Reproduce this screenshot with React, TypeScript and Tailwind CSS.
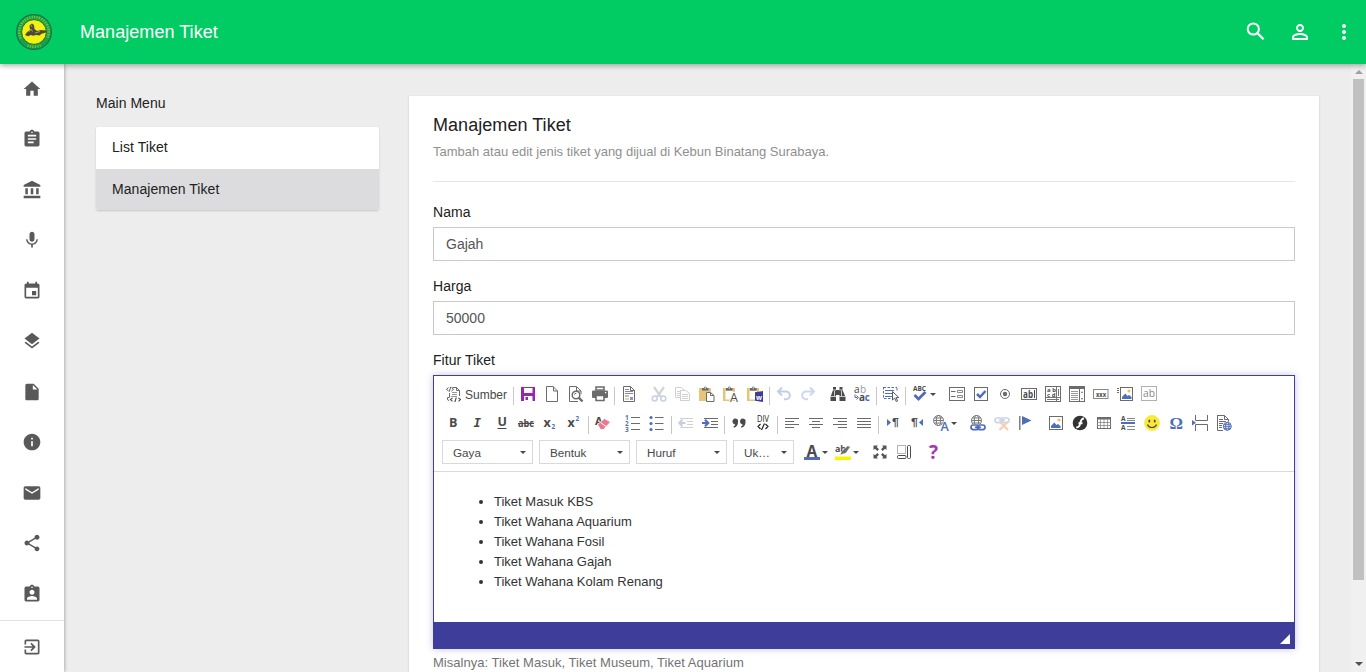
import React from "react";
import {
  MdHome, MdAssignment, MdAccountBalance, MdMic, MdEvent, MdLayers, MdInsertDriveFile,
  MdInfo, MdEmail, MdShare, MdAssignmentInd, MdExitToApp, MdMoreVert, MdPersonOutline,
} from "react-icons/md";

const G = "#6b6b6b";
const D = "#4a4a4a";
const B = "#4f6db8";
const SANS = "'Liberation Sans', Arial, sans-serif";
const OPEN = "'Open Sans', 'Noto Sans', sans-serif";

type TProps = { x: number; y: number; s: number; c?: string; b?: boolean; i?: boolean; f?: string; w?: number; children: string };
const T = ({ x, y, s, c = D, b, i, f = OPEN, w, children }: TProps) => (
  <text x={x} y={y} fontSize={s} fill={c} fontFamily={f} fontWeight={b ? 700 : 400} fontStyle={i ? "italic" : "normal"} textLength={w} lengthAdjust="spacingAndGlyphs">
    {children}
  </text>
);

const lines = (d: string, c = G, w = 1) => <path d={d} stroke={c} strokeWidth={w} fill="none" />;
const Globe = ({ x, y, r, c }: { x: number; y: number; r: number; c: string }) => (
  <g stroke={c} fill="none" strokeWidth={1}>
    <circle cx={x} cy={y} r={r} />
    <ellipse cx={x} cy={y} rx={r / 2.3} ry={r} />
    <path d={`M${x - r} ${y}H${x + r}M${x - r * 0.85} ${y - r / 2}H${x + r * 0.85}M${x - r * 0.85} ${y + r / 2}H${x + r * 0.85}`} />
  </g>
);
const Clipboard = () => (
  <>
    <path d="M0 2h12v13H0z" fill="#e6c57a" />
    <path d="M3 4.500V2h1.800a1.500 1.500 0 0 1 3 0h1.800v2.500z" fill={G} />
    <circle cx="6.300" cy="2" r=".7" fill="#fff" />
  </>
);
const Chain = ({ y, c }: { y: number; c: string }) => (
  <g stroke={c} strokeWidth={1.7} fill="none">
    <rect x={1} y={y} width="7.800" height="4.600" rx="2.300" />
    <rect x={7.200} y={y} width="7.800" height="4.600" rx="2.300" />
    <path d={`M5 ${y + 2.300}h6`} />
  </g>
);
const Pic = ({ x = 0, w = 14 }: { x?: number; w?: number }) => (
  <>
    <rect x={x + 0.5} y="1.500" width={w - 1} height="13" fill="#fff" stroke={G} />
    <circle cx={x + w - 4} cy="5" r="1.600" fill="#e8c26a" />
    <path d={`M${x + 2} 13v-2l3.300-3.500 2.200 2.500 1.500-1 2.500 2V13z`} fill={B} />
  </>
);

const icons: Record<string, React.ReactNode> = {
  source: (
    <>
      <path d="M6.500 1.500h4l3 3V10M10.500 1.500v3h3M3.500 7v4.500H1.500v1.500a1.500 1.500 0 0 0 1.500 1.500" stroke={G} fill="none" />
      <path d="M2.500 1.500L.5 3.300l2 1.700M5.500 1.500l2 1.800L5.500 5M4.700.8L3.300 5.700" stroke={D} fill="none" strokeWidth=".9" />
      <path d="M6 6.500h5M6 8.500h5M5 10.500h6" stroke="#999" />
      <path d="M6.500 11.800l-2 1.800 2 1.700M12.500 11.800l2 1.800-2 1.700M10.300 11.500l-1.500 4.500" stroke={D} fill="none" strokeWidth="1.100" />
    </>
  ),
  save: (
    <>
      <path d="M1 1h14v14H1z" fill="#9427ae" />
      <path d="M4 2h8.500v5H4zM4 10h8.500v5H4z" fill="#fff" />
      <path d="M5.500 11h2.500v3H5.500z" fill="#9427ae" />
    </>
  ),
  newpage: lines("M2.500.5H9l4.500 4.500V15.500H2.500zM9.500.5v4.500h4"),
  preview: (
    <>
      {lines("M1.500 15.500V.500H8.500l4.500 4.500V8M8.500 1v4h4.500M1.500 15.500H10")}
      <circle cx="8" cy="9" r="3.800" stroke={G} strokeWidth="1.500" fill="#fff" />
      <path d="M10.700 11.700l3.800 3.800" stroke={G} strokeWidth="2.400" />
      <path d="M6.300 8.800a2 2 0 0 1 2-1.500" stroke={B} fill="none" />
    </>
  ),
  print: (
    <>
      <path d="M4 1h8V4H4z" fill="#fff" stroke={G} strokeWidth="1.600" />
      <rect x="0" y="4.500" width="16" height="7.500" rx="1.200" fill={G} />
      <path d="M4 9.500h8v5H4z" fill="#fff" stroke={G} strokeWidth="1.600" />
      <path d="M13 6h1.300v1.300H13z" fill="#fff" />
    </>
  ),
  templates: (
    <>
      {lines("M2.500.5H9.500l4 4V15.500H2.500zM9.500.5v4h4")}
      {lines("M4 3.500h4M4 5.500h8M4 7.500h8", "#8a8a8a")}
      <path d="M4 9h4v2H4z" fill={B} opacity=".45" /><path d="M4 12h4v2H4z" fill="#e8c26a" opacity=".7" /><path d="M9 11h3v3H9z" fill={B} opacity=".7" />
    </>
  ),
  cut: (
    <>
      <path d="M3 1l7 10M13 1L6 11" stroke="#d4d4d4" strokeWidth="2.200" />
      <circle cx="3.700" cy="12.500" r="2.500" stroke="#c6d0e8" strokeWidth="1.500" fill="#fff" />
      <circle cx="12.300" cy="12.500" r="2.500" stroke="#c6d0e8" strokeWidth="1.500" fill="#fff" />
    </>
  ),
  copy: (
    <>
      {lines("M.5 1.500H6.500l3 3V11.500H.5zM2 5.500h3M2 7.500h3M2 9.500h3", "#d0d0d0")}
      <path d="M5.500 4.500H11l3.500 3V14.500H5.500z" fill="#fff" stroke="#d0d0d0" />
      {lines("M7 8.500h6M7 10.500h6M7 12.500h6", "#d0d0d0")}
    </>
  ),
  paste: (<><Clipboard /><path d="M7.500 6.500h4l3.500 3V15.500H7.500z" fill="#fff" stroke={G} />{lines("M11.500 6.500v3h3.500")}</>),
  pastetext: (<><Clipboard /><path d="M2.500 5h7.500v2.500l-3 6H2.500z" fill="#fff" /><text x="7" y="15.500" fontSize="12.500" fill={D} stroke="#fff" strokeWidth="1.500" paintOrder="stroke" fontFamily={OPEN}>A</text></>),
  pasteword: (<><Clipboard /><path d="M2.500 5h7.500v8.500H2.500z" fill="#fff" /><path d="M8 6.200l8-1.200v11l-8-1.200z" fill="#3f3d99" /><T x={9} y={13.500} s={7.500} c="#fff" b w={6}>w</T></>),
  undo: <path d="M6 1.500L2 5.500l4 4M2.500 5.500H10a3.800 3.800 0 0 1 0 7.700H8" stroke="#c3cde6" strokeWidth="2" fill="none" />,
  redo: <path d="M10 1.500l4 4-4 4M13.500 5.500H6a3.800 3.800 0 0 0 0 7.700H8" stroke="#cdd6eb" strokeWidth="2" fill="none" />,
  find: (<><path d="M3 1h3v3h3.500V1h3v3l3 7v4H9.500V9H6v6H.5v-4l2.500-7z" fill={D} /><path d="M.5 10.500H6M9.500 10.500h6M3 4h3M9.500 4h3M4.500 5v5M11.500 5v5" stroke="#fff" strokeWidth=".7" /><path d="M6 6.500h4" stroke={D} /></>),
  replace: (<><T x={0} y={7} s={10} c="#444">a</T><T x={6} y={7} s={10} c="#999">b</T><T x={5} y={15} s={10} b>a</T><T x={10.800} y={15} s={10} c={B} b>c</T><path d="M1 8.500v3H3.500M2.500 9.500l2 2-2 2" stroke={B} fill="none" /></>),
  select: (<><path d="M.5 1.500H14M.5 1v11.500H8M14 2v4" stroke={B} strokeDasharray="2.500 1.500" fill="none" /><path d="M2 4.500h9M2 7.500h7M2 10.500h7" stroke={B} /><path d="M9.500 5.500v8.500l2.200-2 1.500 3.500 1.300-.6-1.400-3.300h2.800z" fill="#fff" stroke={D} strokeWidth=".9" /></>),
  spell: (<><T x={1} y={5} s={6.500} b w={13}>ABC</T><path d="M2.500 9l4 4 7-7" stroke={B} strokeWidth="2.800" fill="none" /></>),
  form: (<><rect x=".5" y="1.500" width="15" height="13" stroke={G} fill="#fff" />{lines("M2 5.500h4.500M2 10.500h4.500")}{lines("M8.500 4.500h5v2h-5zM8.500 9.500h5v2h-5z", "#8a8a8a")}</>),
  checkbox: (<><rect x="1.500" y="1.500" width="13" height="13" stroke={G} fill="#fff" /><path d="M4 8l3 3 5.500-6" stroke={B} strokeWidth="2.500" fill="none" /></>),
  radio: (<><circle cx="8" cy="8" r="4.500" stroke={G} fill="none" /><circle cx="8" cy="8" r="2.200" fill={G} /></>),
  textfield: (<><rect x=".5" y="2.500" width="15" height="11" stroke={G} fill="#fff" /><T x={2} y={11.500} s={10} b w={10}>ab</T>{lines("M13.500 4v8", D)}</>),
  textarea: (<><rect x=".5" y=".5" width="15" height="15" stroke={G} fill="#fff" />{lines("M11.500 1v14M1 11.500h14M13.500 3v7", "#777")}{lines("M2 13.500h12", "#777")}<T x={2} y={5.500} s={6} b>a b</T><T x={2} y={10.500} s={6} b>c d</T></>),
  selectbox: (<><rect x=".5" y=".5" width="15" height="15" stroke={G} fill="#fff" />{lines("M1 2h9", G, 2)}{lines("M10.500 1v14", G)}{lines("M2 5.500h7M2 7.500h7M2 9.500h7M2 11.500h7M2 13.500h7", "#999")}<path d="M11 1h4v2h-4zM12 7l1-2 1 2zM12 12l1 2 1-2z" fill={G} /></>),
  button: (<><rect x=".5" y="3.500" width="14.500" height="9" stroke="#888" fill="#fff" /><T x={3} y={10.500} s={7} b w={10}>xxx</T></>),
  imgbutton: (<><Pic x={3} w={13} />{lines("M0 2.500h2M0 4.500h2M0 6.500h2", G)}</>),
  hidden: (<><rect x=".5" y=".5" width="15" height="14" stroke="#b0b0b0" fill="#fff" /><T x={2} y={11} s={11} c="#888" w={12}>ab</T></>),
  bold: <T x={3} y={12} s={12.500} b>B</T>,
  italic: <T x={3.500} y={12} s={12.500} b i f="'DejaVu Sans Mono', monospace">I</T>,
  underline: (<><T x={3.500} y={11} s={12.500} b>U</T>{lines("M3.500 13.500h9", D)}</>),
  strike: (<><T x={0} y={12} s={11} b w={16}>abc</T>{lines("M0 8.500h16", D)}</>),
  sub: (<><T x={1.500} y={12} s={12.500} b>x</T><T x={9.500} y={14} s={6.500} c={B} b>2</T></>),
  sup: (<><T x={1.500} y={12} s={12.500} b>x</T><T x={9.500} y={6} s={6.500} c={B} b>2</T></>),
  eraser: (<><T x={0} y={9.500} s={11} b>A</T><path d="M1.500 9.500L8.500 3.500l6 3.500-7 7.500H4.500z" transform="translate(1 0)" fill="#ec7990" stroke="#fff" strokeWidth=".8" /><path d="M5.500 7.500l5.500 4" stroke="#fff" /></>),
  numbered: (<><T x={0} y={5} s={6.500} c={B} b>1</T><T x={0} y={11} s={6.500} c={B} b>2</T><T x={0} y={17} s={6.500} c={B} b>3</T>{lines("M6 2.500h9M6 8.500h9M6 14.500h9")}</>),
  bulleted: (<><circle cx="2" cy="2.500" r="1.600" fill={B} /><circle cx="2" cy="8.500" r="1.600" fill={B} /><circle cx="2" cy="14.500" r="1.600" fill={B} />{lines("M6 2.500h8.500M6 8.500h8.500M6 14.500h8.500")}</>),
  outdent: (<>{lines("M2 3.500h13M9 6.500h6M9 9.500h6M2 12.500h13", "#d0d0d0")}<path d="M7.500 8H2M4.500 4.800L1.300 8l3.200 3.200" stroke="#c3cde6" strokeWidth="2" fill="none" /></>),
  indent: (<>{lines("M2 3.500h14M9 6.500h7M9 9.500h7M2 12.500h14")}<path d="M0 8h6M3 4.800L6.200 8 3 11.200" stroke={B} strokeWidth="2.200" fill="none" /></>),
  quote: (<path d="M7 4.500v3C7 10 5.500 12 3 12.800L2.500 11.500C3.500 11 4 10.500 4.200 9.500A3 3 0 1 1 7 5zM14.500 4.500v3c0 2.500-1.500 4.500-4 5.300L10 11.500c1-.5 1.500-1 1.700-2A3 3 0 1 1 14.500 5z" fill={D} />),
  div: (<><T x={2} y={7} s={8.500} c="#222" w={12}>DIV</T><path d="M5.500 9L3 11.500 5.500 14M10.500 9l2.500 2.500L10.500 14M9.500 8.500l-3 6.500" stroke="#222" strokeWidth="1.200" fill="none" /></>),
  left: lines("M1 3.500h14M1 6.500h9M1 9.500h14M1 12.500h9"),
  center: lines("M1 3.500h14M4 6.500h8M1 9.500h14M4 12.500h8"),
  right: lines("M1 3.500h14M6 6.500h9M1 9.500h14M6 12.500h9"),
  justify: lines("M1 3.500h14M1 6.500h14M1 9.500h14M1 12.500h14"),
  ltr: (<><path d="M2 4l4 3.500L2 11z" fill={B} /><T x={7} y={11} s={11} b w={7} f={SANS}>¶</T></>),
  rtl: (<><path d="M14 4l-4 3.500 4 3.500z" fill={B} /><T x={2} y={11} s={11} b w={7} f={SANS}>¶</T></>),
  language: (<><Globe x={5.500} y={5.500} r={5} c="#777" /><text x="7.500" y="15.500" fontSize="12.500" fontWeight="600" fill={B} stroke="#fff" strokeWidth="1.200" paintOrder="stroke" fontFamily={OPEN}>A</text></>),
  link: (<><Globe x={6.500} y={5.500} r={5} c="#777" /><path d="M0 9h16v7H0z" fill="#fff" /><Chain y={10} c={B} /></>),
  unlink: (<><Chain y={3} c="#cbd5ea" /><path d="M5.500 6.500l8.500 8.500M14 6.500L5.500 15" stroke="#f5cfb5" strokeWidth="2.200" /></>),
  anchor: (<><path d="M1.800 1v14" stroke={G} strokeWidth="1.300" /><path d="M4 1l9.500 4.500L4 10z" fill={B} /></>),
  image: <Pic x={1} />,
  flash: (<><circle cx="8" cy="8" r="7.300" fill="#333" /><path d="M12 3.500C8 3.500 8.500 9 7.300 11c-.7 1.200-1.800 1.400-3 1.500M6.500 8.300h4" stroke="#fff" strokeWidth="1.900" fill="none" /></>),
  table: (<><rect x="1.500" y="2.500" width="13" height="11" stroke={G} fill="#fff" /><path d="M1 2h14v2.500H1z" fill={G} />{lines("M1 7.500h14M1 10.500h14M4.500 4v9M8 4v9M11.500 4v9", "#888", 0.8)}</>),
  hr: (<><T x={1} y={6} s={6.500} b>A</T><T x={1} y={15} s={6.500} b>A</T>{lines("M7 3.500h8M7 5.500h8M7 11.500h8M7 14.500h8", "#888")}<path d="M1 7h14v2H1z" fill={B} /></>),
  smiley: (<><circle cx="8" cy="8" r="7.900" fill="#f9e93a" /><ellipse cx="5.300" cy="6" rx="1" ry="1.600" fill={D} /><ellipse cx="10.700" cy="6" rx="1" ry="1.600" fill={D} /><path d="M3.500 9.500c1.500 4 7.500 4 9 0" stroke={D} strokeWidth="1.200" fill="none" /></>),
  omega: <T x={1.500} y={14} s={17} c={B} b f="'Liberation Serif', serif" w={13.500}>Ω</T>,
  pagebreak: (<>{lines("M3.500 0v5.500H15.500V0M3.500 16v-6.500H15.500V16")}<path d="M0 5l4 2.700L0 10.500z" fill={B} /></>),
  iframe: (<>{lines("M1.500.5H8.500l4 4V7M8.500.5v4h4M1.500 0V15.500H7M3 4.500h4M3 6.500h7M3 8.500h4M3 10.500h3M3 12.500h3")}<circle cx="11.300" cy="11.300" r="4.700" fill="#fff" /><Globe x={11.300} y={11.300} r={4} c={B} /></>),
  textcolor: (<><T x={2.500} y={13} s={15.500} b>A</T><path d="M0 13h16v3H0z" fill={B} /></>),
  bgcolor: (<><T x={0} y={7.500} s={9.500} b w={11}>ab</T><path d="M5 11l1.500-3.500 6-5.500 3 .5-4.500 6.500z" fill={G} stroke="#fff" strokeWidth=".5" /><path d="M0 12.500h16V16H0z" fill="#f6f600" /></>),
  maximize: (<path d="M1.500 1.500h4.500L4.700 3 7 5.300 5.300 7 3 4.700 1.500 6zM14.500 1.500V6L13 4.700 10.700 7 9 5.300 11.300 3 10 1.500zM1.500 14.500V10L3 11.300 5.300 9 7 10.700 4.700 13 6 14.500zM14.500 14.500H10l1.300-1.500L9 10.700 10.700 9l2.300 2.300 1.500-1.300z" fill="#555" />),
  blocks: (<><path d="M1.500 1.500h8v8h-8z" stroke={G} strokeDasharray="1 1" fill="none" /><rect x="1.500" y="11.500" width="8.500" height="3" rx="1" stroke={D} fill="none" /><rect x="11.500" y="1.500" width="3" height="13" rx="1" stroke={D} fill="none" /></>),
  about: <T x={3} y={15} s={19} c="#a636b8" b>?</T>,
};

const Glyph = ({ name }: { name: string }) => (
  <svg width="16" height="16" viewBox="0 0 16 16" className="block shrink-0 overflow-visible">{icons[name]}</svg>
);
const Caret = () => (
  <svg width="6" height="3" viewBox="0 0 6 3" className="block shrink-0"><path d="M0 0h6L3 3z" fill="#484848" /></svg>
);

const Row = ({ items }: { items: string }) => (
  <>
    {items.split(" ").map((n, k) => {
      if (n === "|") return <span key={k} className="flex h-6 w-[5px] justify-center pt-[5px]"><i className="h-[18px] w-px bg-[#c8c8c8]" /></span>;
      if (n === "_") return <span key={k} className="w-1.5" />;
      if (n.endsWith("+")) return <button key={k} className="flex h-6 w-[31px] items-center gap-0.5 pl-1"><Glyph name={n.slice(0, -1)} /><Caret /></button>;
      return <button key={k} className="flex h-6 w-6 items-center justify-center"><Glyph name={n} /></button>;
    })}
  </>
);

const Combo = ({ label, small }: { label: string; small?: boolean }) => (
  <div className={`mr-1.5 flex h-6 items-center justify-between border border-[#d9d9d9] pl-2.5 pr-1.5 text-[11.7px] text-[#484848] ${small ? "w-[61px]" : "w-[91px]"}`}>
    <span className="pt-px">{label}</span>
    <Caret />
  </div>
);

const nav = [MdHome, MdAssignment, MdAccountBalance, MdMic, MdEvent, MdLayers, MdInsertDriveFile, MdInfo, MdEmail, MdShare, MdAssignmentInd];

const Logo = () => (
  <svg width="38" height="38" viewBox="0 0 38 38" className="block">
    <circle cx="19" cy="19" r="17.400" fill="#16a04b" stroke="#1c7350" strokeWidth="1.200" />
    <path d="M5.800 25.500A14.800 14.800 0 1 1 32.200 25.500" fill="none" stroke="#9fdc2c" strokeWidth="2.600" strokeDasharray="1.200 1.300" opacity=".7" />
    <path d="M12.500 32.300a14.800 14.800 0 0 0 13 0" fill="none" stroke="#9fdc2c" strokeWidth="2.400" strokeDasharray="1.200 1.300" opacity=".7" />
    <circle cx="19" cy="19" r="12.400" fill="#f2f20e" stroke="#17713c" strokeWidth="1" />
    <path d="M10 22c1.500-2.500 3-3.800 5-5l-.5-4.500 2.500-2 2 1.500.5 4 2.500 2 4-1 5.500.5-.5 2-5 1.500-1 1.500-4-.5-3 .8-2-.8-3 1.300z" fill="#4f4a38" />
    <path d="M14 19l2-3 1.500 2.500M20 20l5-1.500M16 12l1 2" stroke="#a3a37a" strokeWidth=".9" fill="none" />
  </svg>
);

const Field = ({ label, value }: { label: string; value: string }) => (
  <div className="mb-[15px]">
    <label className="block h-[25px] text-[14px] leading-5 tracking-[0.05px]">{label}</label>
    <input readOnly value={value} className="block h-[34px] w-full border border-[#c9c9cd] bg-white px-3 text-[14px] text-[#555] outline-none" />
  </div>
);

export default function App() {
  return (
    <div className="flex h-[672px] w-full flex-col overflow-hidden bg-[#ededed] font-['Liberation_Sans',Arial,sans-serif] text-[#212121]">
      <header className="relative z-20 flex h-16 shrink-0 items-center bg-[#00cc63] pl-[15px] pr-3 text-white shadow-[0_2px_5px_rgba(0,0,0,0.3)]">
        <Logo />
        <h1 className="ml-[27px] flex-1 text-[18px] leading-6 tracking-[0.05px]">Manajemen Tiket</h1>
        <div className="flex items-center gap-5 pb-px">
          <svg width="24" height="24" viewBox="0 0 24 24" fill="none" stroke="#fff">
            <circle cx="9.300" cy="9" r="5.600" strokeWidth="2" />
            <path d="M13.300 13l6.300 6.300" strokeWidth="2.300" />
          </svg>
          <MdPersonOutline size={24} />
          <MdMoreVert size={24} className="mr-[-2px]" />
        </div>
      </header>

      <div className="flex min-h-0 flex-1">
        <nav className="relative z-10 flex w-16 shrink-0 flex-col bg-white text-[#595959] shadow-[1px_0_3px_rgba(0,0,0,0.25)]">
          {nav.map((Icon, k) => (
            <a key={k} className="flex h-[50.5px] shrink-0 items-center justify-center pb-[1.1px]"><Icon size={20} /></a>
          ))}
          <a className="mt-[0.5px] flex h-[53px] shrink-0 items-center justify-center border-t border-[#e2e2e2]"><MdExitToApp size={20} /></a>
        </nav>

        <main className="flex min-w-0 flex-1 items-start pl-8">
          <aside className="w-[283px] shrink-0 pt-[29px]">
            <h2 className="text-[14px] leading-5 tracking-[0.03px]">Main Menu</h2>
            <ul className="mt-[14px] overflow-hidden rounded-[2px] bg-white text-[14px] tracking-[0.05px] shadow-[0_1px_2px_rgba(0,0,0,0.17)]">
              <li className="flex h-[42px] items-center px-4 pb-0.5">List Tiket</li>
              <li className="flex h-[41px] items-center bg-[#dcdcde] px-4 pb-px">Manajemen Tiket</li>
            </ul>
          </aside>

          <section className="ml-[30px] mt-8 h-[640px] w-[910px] shrink-0 bg-white px-6 pt-[17px] shadow-[0_1px_2px_rgba(0,0,0,0.18)]">
            <h2 className="text-[18px] leading-6 tracking-[0.05px]">Manajemen Tiket</h2>
            <p className="mt-[5px] text-[13px] leading-5 text-[#8f8f8f]">Tambah atau edit jenis tiket yang dijual di Kebun Binatang Surabaya.</p>
            <hr className="mb-5 mt-[19px] border-t border-[#e5e5e5]" />
            <Field label="Nama" value="Gajah" />
            <Field label="Harga" value="50000" />
            <label className="block h-[25px] text-[14px] leading-5 tracking-[0.05px]">Fitur Tiket</label>
            <div className="h-[274px] border border-[#3f3e9b] bg-white shadow-[0_0_7px_rgba(63,62,155,0.3)]">
              <div className="flex h-24 flex-col gap-[5px] border-b border-[#d9d9d9] pl-2 pt-1.5">
                <div className="flex h-6">
                  <button className="flex h-6 w-[69px] items-center gap-[3px] pl-1 text-[12px] text-[#484848]"><Glyph name="source" /><span className="pt-0.5">Sumber</span></button>
                  <Row items="| save newpage preview print | templates _ cut copy paste pastetext pasteword | undo redo _ find replace | select | spell+ _ form checkbox radio textfield textarea selectbox button imgbutton hidden" />
                </div>
                <div className="flex h-6">
                  <Row items="bold italic underline strike sub sup | eraser _ numbered bulleted | outdent indent | quote div | left center right justify | ltr rtl language+ _ link unlink anchor _ image flash table hr smiley omega pagebreak iframe" />
                </div>
                <div className="flex h-6">
                  <Combo label="Gaya" />
                  <Combo label="Bentuk" />
                  <Combo label="Huruf" />
                  <Combo label="Uk…" small />
                  <Row items="textcolor+ bgcolor+ _ maximize blocks _ about" />
                </div>
              </div>
              <div className="h-[150px] px-5 pt-5 text-[13px] leading-5 text-[#333]">
                <ul className="list-disc pl-10">
                  <li>Tiket Masuk KBS</li>
                  <li>Tiket Wahana Aquarium</li>
                  <li>Tiket Wahana Fosil</li>
                  <li>Tiket Wahana Gajah</li>
                  <li>Tiket Wahana Kolam Renang</li>
                </ul>
              </div>
              <div className="flex h-[26px] items-end justify-end bg-[#3e3e9a] pb-1 pr-1">
                <svg width="10" height="10" viewBox="0 0 10 10"><path d="M10 0v10H0z" fill="#fff" /></svg>
              </div>
            </div>
            <p className="mt-1 text-[13px] leading-5 tracking-[0.03px] text-[#737373]">Misalnya: Tiket Masuk, Tiket Museum, Tiket Aquarium</p>
          </section>

          <div className="ml-auto flex h-[608px] w-[15px] shrink-0 flex-col items-center bg-[#f0f0f0] pb-[6px] pt-[6px]">
            <svg width="8" height="4" viewBox="0 0 8 4" className="shrink-0"><path d="M0 4h8L4 0z" fill="#a0a0a0" /></svg>
            <div className="mt-[5px] h-[501px] w-[11px] shrink-0 bg-[#c0c0c0]" />
            <svg width="8" height="4" viewBox="0 0 8 4" className="mt-auto shrink-0"><path d="M0 0h8L4 4z" fill="#505050" /></svg>
          </div>
        </main>
      </div>
    </div>
  );
}
